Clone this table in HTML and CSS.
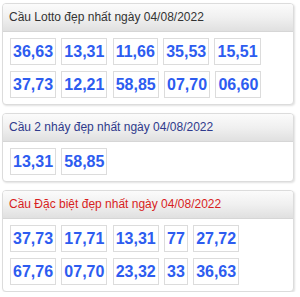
FILE: index.html
```html
<!DOCTYPE html>
<html>
<head>
<meta charset="utf-8">
<link rel="stylesheet" href="styles.css">
</head>
<body>
<div class="page">
  <section class="panel">
    <div class="head">Cầu Lotto đẹp nhất ngày 04/08/2022</div>
    <div class="body">
      <div class="row"><span class="num">36,63</span><span class="num">13,31</span><span class="num">11,66</span><span class="num">35,53</span><span class="num">15,51</span></div>
      <div class="row"><span class="num">37,73</span><span class="num">12,21</span><span class="num">58,85</span><span class="num">07,70</span><span class="num">06,60</span></div>
    </div>
  </section>
  <section class="panel">
    <div class="head blue">Cầu 2 nháy đẹp nhất ngày 04/08/2022</div>
    <div class="body">
      <div class="row"><span class="num">13,31</span><span class="num">58,85</span></div>
    </div>
  </section>
  <section class="panel">
    <div class="head red">Cầu Đặc biệt đẹp nhất ngày 04/08/2022</div>
    <div class="body">
      <div class="row"><span class="num">37,73</span><span class="num">17,71</span><span class="num">13,31</span><span class="num">77</span><span class="num">27,72</span></div>
      <div class="row"><span class="num">67,76</span><span class="num">07,70</span><span class="num">23,32</span><span class="num">33</span><span class="num">36,63</span></div>
    </div>
  </section>
</div>
</body>
</html>
```
FILE: styles.css
```css
html, body {
  margin: 0;
  padding: 0;
  background: #fff;
}
body {
  font-family: "Liberation Sans", Arial, sans-serif;
}
.page {
  padding: 3px 0 0 2px;
  width: 292px;
  display: flex;
  flex-direction: column;
  gap: 8px;
}
.panel {
  border: 1px solid #dcdcdc;
  border-radius: 4px;
  background: #fff;
  box-shadow: 1px 1px 2px rgba(0, 0, 0, 0.12);
  overflow: hidden;
}
.head {
  height: 27px;
  line-height: 27px;
  padding-left: 6px;
  font-size: 12px;
  color: #333;
  background: linear-gradient(to bottom, #fbfbfb 0%, #f0f0f0 50%, #e0e0e0 100%);
  border-bottom: 1px solid #d6d6d6;
}
.head.blue {
  color: #2f3a8c;
}
.head.red {
  color: #d81e1e;
}
.body {
  padding: 6px 7px 6px 7px;
  display: flex;
  flex-direction: column;
  gap: 6px;
}
.row {
  display: flex;
  gap: 5.3px;
}
.num {
  display: block;
  border: 1px solid #dcdcdc;
  padding: 0 2px;
  height: 25px;
  line-height: 25px;
  font-size: 16px;
  font-weight: bold;
  color: #2d5cf0;
  background: #fff;
}
```
